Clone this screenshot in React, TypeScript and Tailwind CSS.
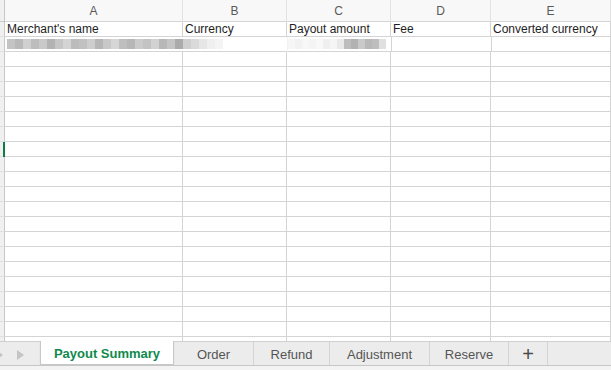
import React from "react";

const ROWS = 21;

const blurA = ["#c4c4c4","#b9b9b9","#d0d0d0","#bdbdbd","#c9c9c9","#b3b3b3","#c6c6c6","#d4d4d4","#bcbcbc","#c1c1c1","#cdcdcd","#b6b6b6","#c8c8c8","#d6d6d6","#bfbfbf","#b7b7b7","#cbcbcb","#c3c3c3","#d2d2d2","#b8b8b8","#c5c5c5","#ababab","#cfcfcf","#dadada","#e6e6e6","#efefef","#f4f4f4"];
const blurC = ["#f6f6f6","#f2f2f2","#f7f7f7","#f4f4f4","#f8f8f8","#efefef","#f5f5f5","#e9e9e9","#bdbdbd","#b2b2b2","#c9c9c9","#b8b8b8","#bebebe","#e0e0e0"];

export default function App() {
  const cellBase = "border-r border-b border-[#d4d4d4] shrink-0 overflow-hidden whitespace-nowrap";
  const widths = ["w-[178px]", "w-[104px]", "w-[104px]", "w-[100px]", "flex-1"];
  const headers = ["A", "B", "C", "D", "E"];
  const labels = ["Merchant's name", "Currency", "Payout amount", "Fee", "Converted currency"];
  return (
    <div className="w-[611px] h-[370px] flex flex-col bg-white overflow-hidden" style={{ fontFamily: '"Liberation Sans", Arial, sans-serif' }}>
      <div className="h-[341px] shrink-0 overflow-hidden flex flex-col">
        {/* column header */}
        <div className="flex h-[22px] shrink-0">
          <div className="w-[5px] shrink-0 bg-[#f0f0f0] border-r border-b border-[#c8c8c8]" />
          {headers.map((h, i) => (
            <div key={h} className={`${widths[i]} ${cellBase} border-r-[#e2e2e2] bg-[#f8f8f8] flex items-center justify-center text-[12px] text-[#5a5a5a] pt-[1px]`}>{h}</div>
          ))}
        </div>
        {/* row 1 labels */}
        <div className="flex h-[15px] shrink-0">
          <div className="w-[5px] shrink-0 bg-[#f0f0f0] border-r border-b border-[#c8c8c8] border-b-[#e0e0e0]" />
          {labels.map((l, i) => (
            <div key={l} className={`${widths[i]} ${cellBase} text-[12px] leading-[14px] text-[#1e1e1e] pl-[2px]`}>{l}</div>
          ))}
        </div>
        {/* row 2 blurred */}
        <div className="flex h-[15px] shrink-0">
          <div className="w-[5px] shrink-0 bg-[#f0f0f0] border-r border-b border-[#c8c8c8] border-b-[#e0e0e0]" />
          <div className="w-[283px] shrink-0 border-b border-[#d4d4d4] flex items-center pl-[2px] border-r border-r-[#f2f2f2]">
            <div className="flex h-[10px] blur-[0.5px]">
              {blurA.map((c, i) => (
                <div key={i} className="w-[8px] h-full" style={{ backgroundColor: c }} />
              ))}
            </div>
          </div>
          <div className={`w-[104px] ${cellBase} flex items-center`}>
            <div className="flex h-[10px] blur-[0.5px]">
              {blurC.map((c, i) => (
                <div key={i} className="w-[7px] h-full" style={{ backgroundColor: c }} />
              ))}
            </div>
          </div>
          <div className={`w-[100px] ${cellBase}`} />
          <div className={`flex-1 ${cellBase}`} />
        </div>
        {Array.from({ length: ROWS }).map((_, r) => (
          <div key={r} className="flex h-[15px] shrink-0">
            <div className="w-[5px] shrink-0 bg-[#f0f0f0] border-r border-b border-[#c8c8c8] border-b-[#e0e0e0] relative">
              {r === 6 && <div className="absolute left-[3px] top-0 w-[2px] h-[16px] bg-[#0f7b45]" />}
            </div>
            {widths.map((w, i) => (
              <div key={i} className={`${w} ${cellBase}`} />
            ))}
          </div>
        ))}
      </div>
      {/* tab bar */}
      <div className="h-[29px] shrink-0 flex flex-col bg-[#f0f0f0]">
        <div className="h-[24px] flex border-t border-[#d0d0d0] bg-[#ececec] items-stretch text-[13px] text-[#555]">
          <div className="w-[40px] flex items-center relative">
            <div className="absolute left-[-4px] top-[8px] w-0 h-0 border-y-[5px] border-y-transparent border-l-[7px] border-l-[#c4c4c4]" />
            <div className="absolute left-[17px] top-[8px] w-0 h-0 border-y-[5px] border-y-transparent border-l-[7px] border-l-[#c4c4c4]" />
          </div>
          <div className="w-[134px] -mt-[1px] bg-white border-x border-b border-[#c8c8c8] rounded-b-[2px] shadow-[0_1px_1px_rgba(0,0,0,0.2)] flex items-center justify-center font-bold text-[#0f8a4c] text-[13px] pt-[2px]">Payout Summary</div>
          <div className="w-[80px] border-r border-[#d4d4d4] flex items-center justify-center pt-[2px]">Order</div>
          <div className="w-[76px] border-r border-[#d4d4d4] flex items-center justify-center pt-[2px]">Refund</div>
          <div className="w-[100px] border-r border-[#d4d4d4] flex items-center justify-center pt-[2px]">Adjustment</div>
          <div className="w-[79px] border-r border-[#d4d4d4] flex items-center justify-center pt-[2px]">Reserve</div>
          <div className="w-[39px] border-r border-[#d4d4d4] flex items-center justify-center text-[20px] leading-none text-[#4a4a4a] font-light">+</div>
          <div className="flex-1" />
        </div>
        <div className="h-[1px] bg-[#c6c6c6]" />
        <div className="flex-1 bg-[#f3f3f3]" />
      </div>
    </div>
  );
}
